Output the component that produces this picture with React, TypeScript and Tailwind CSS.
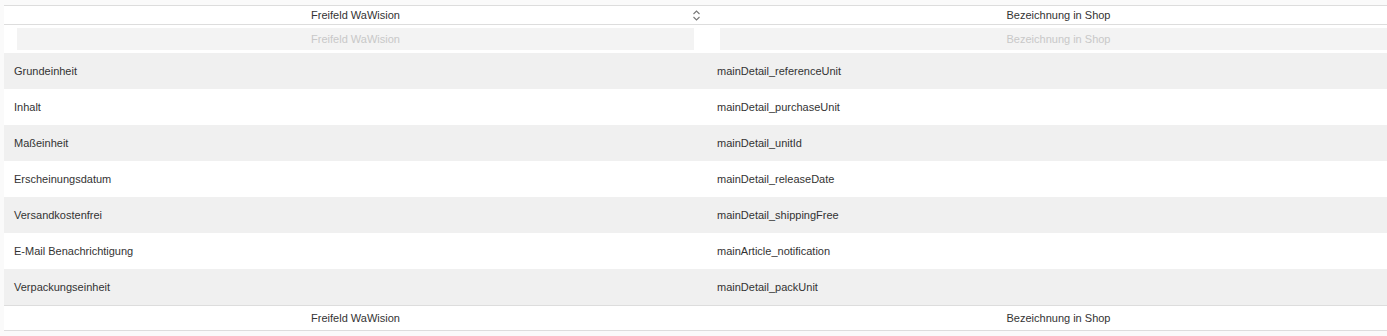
const ROWS = [
  ["Grundeinheit", "mainDetail_referenceUnit"],
  ["Inhalt", "mainDetail_purchaseUnit"],
  ["Maßeinheit", "mainDetail_unitId"],
  ["Erscheinungsdatum", "mainDetail_releaseDate"],
  ["Versandkostenfrei", "mainDetail_shippingFree"],
  ["E-Mail Benachrichtigung", "mainArticle_notification"],
  ["Verpackungseinheit", "mainDetail_packUnit"],
]

function SortIcon() {
  return (
    <svg width="9" height="11" viewBox="0 0 9 11" fill="none" stroke="#777" strokeWidth="1.1">
      <path d="M1.5 4 L4.5 1 L7.5 4" />
      <path d="M1.5 7 L4.5 10 L7.5 7" />
    </svg>
  )
}

export default function App() {
  return (
    <div className="h-[336px] w-full overflow-hidden bg-[#fafafa] pl-[4px] pt-[5px] font-['Liberation_Sans',Arial,sans-serif] text-[11px] text-[#333]">
      <div className="w-[1406px] bg-white">
        {/* header */}
        <div className="flex h-[20px] border-y border-[#dddddd]">
          <div className="relative flex w-[703px] items-center justify-center">
            Freifeld WaWision
            <span className="absolute right-[6px] top-[4px]"><SortIcon /></span>
          </div>
          <div className="flex w-[703px] items-center justify-center">Bezeichnung in Shop</div>
        </div>

        {/* filter row */}
        <div className="flex h-[28px] items-center">
          <div className="w-[703px] px-[13px]">
            <div className="flex h-[22px] items-center justify-center bg-[#f3f3f3] text-[#c8c8c8]">Freifeld WaWision</div>
          </div>
          <div className="w-[703px] px-[13px]">
            <div className="flex h-[22px] items-center justify-center bg-[#f3f3f3] text-[#c8c8c8]">Bezeichnung in Shop</div>
          </div>
        </div>

        {/* body */}
        {ROWS.map(([a, b], i) => (
          <div key={a} className={"flex h-[36px] items-center " + (i % 2 === 0 ? "bg-[#f0f0f0]" : "bg-white")}>
            <div className="w-[703px] px-[10px]">{a}</div>
            <div className="w-[703px] px-[10px]">{b}</div>
          </div>
        ))}

        {/* footer */}
        <div className="flex h-[26px] border-y border-[#dddddd]">
          <div className="flex w-[703px] items-center justify-center">Freifeld WaWision</div>
          <div className="flex w-[703px] items-center justify-center">Bezeichnung in Shop</div>
        </div>
      </div>
    </div>
  )
}
